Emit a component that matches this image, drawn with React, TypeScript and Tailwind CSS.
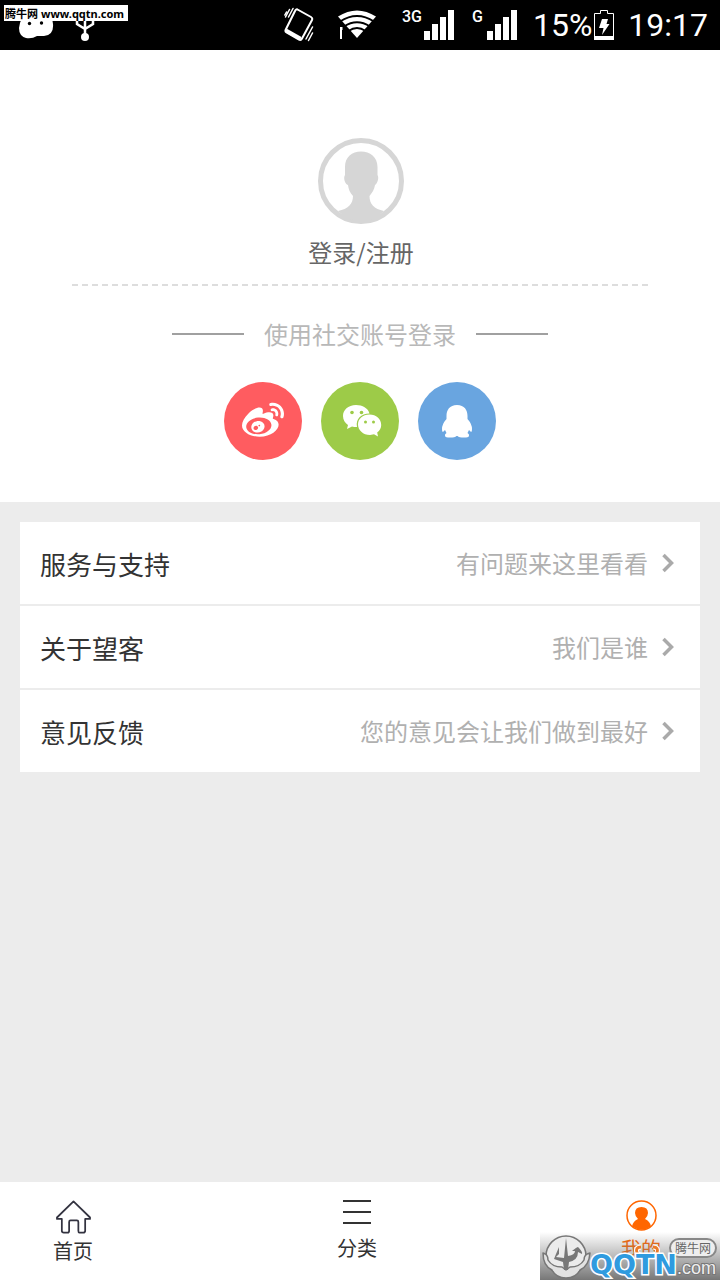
import React from 'react';
import { FaWeibo } from 'react-icons/fa';

const links = [
  { title: '服务与支持', hint: '有问题来这里看看', href: '#support' },
  { title: '关于望客', hint: '我们是谁', href: '#about' },
  { title: '意见反馈', hint: '您的意见会让我们做到最好', href: '#feedback' },
];

const SignalBars = () => (
  <svg width="30" height="30" viewBox="0 0 30 30" fill="#fff" aria-hidden="true">
    <path d="M0 21h6v9H0zM8 14h6v16H8zM16 7h6v23h-6zM24 0h6v30h-6z" />
  </svg>
);

const VibrateIcon = () => (
  <svg width="30" height="36" viewBox="0 0 30 36" fill="none" aria-hidden="true">
    <path d="M13.500 2.500 27 10Q28.800 11 28 13L18 31.500Q17 33.500 15 32.500L2.500 25.500Q.8 24.500 1.800 22.500L11 4Q12 1.800 13.500 2.500Z" stroke="#fff" strokeWidth="2" />
    <path d="M2.500 21.500 17.500 30 16 33.500 1.500 25.500Z" fill="#fff" />
    <path d="M9 1.500 4.500 10M5.500 2.500 1.500 10M2.500 5 .8 8M28.500 20l-6.500 12M28.500 26l-4 7.500" stroke="#fff" strokeWidth="1.500" strokeLinecap="round" />
  </svg>
);

const WifiIcon = () => (
  <svg width="38" height="30" viewBox="0 0 38 30" aria-hidden="true">
    <path d="M0 6.500Q19-5.500 38 6.500L19 28Z" fill="#fff" />
    <path d="M2 11.500Q19 .5 36 11.500M6 16.500Q19 8 32 16.500M10.500 21Q19 15 27.500 21" fill="none" stroke="#000" strokeWidth="1.800" />
    <path d="M2 17h2.500v3H4v9H2z" fill="#fff" />
  </svg>
);

const BatteryIcon = () => (
  <svg width="20" height="30" viewBox="0 0 20 30" aria-hidden="true">
    <path d="M.5 3.500h6v-3h7v3h6v26H.5z" fill="none" stroke="#fff" />
    <path d="M0 26h20v4H0z" fill="#fff" />
    <path d="M8 9h6l-1.500 5h3L8 25l1.500-7H5z" fill="#fff" />
  </svg>
);

const StatusBar = () => (
  <header className="relative flex h-[50px] items-center bg-black pl-[18px] pr-3 font-['Roboto',sans-serif] text-[32px] leading-none text-white">
    <svg width="36" height="30" viewBox="0 0 36 30" aria-hidden="true">
      <path d="M9 4Q18-1 27 4Q35 6 35 14Q36 25 26 26H19Q14 29 8 28Q1 26 1 18Q2 8 9 4Z" fill="#fff" />
      <circle cx="11.500" cy="13.500" r="1.700" />
      <circle cx="23.500" cy="13" r="1.700" />
    </svg>
    <svg className="ml-5" width="22" height="34" viewBox="0 0 22 34" fill="none" stroke="#fff" strokeWidth="2.500" aria-hidden="true">
      <path d="M11 2v26M3 12v4l8 5M19 12v4l-8 5" />
      <circle cx="11" cy="29" r="4" fill="#fff" stroke="none" />
    </svg>
    <div className="ml-auto flex items-center">
      <VibrateIcon />
      <div className="ml-6 mr-[26px]"><WifiIcon /></div>
      <span className="mr-0.5 self-start pt-0.5 text-base font-medium leading-none">3G</span>
      <SignalBars />
      <span className="ml-[18px] mr-1 self-start pt-0.5 text-base font-medium leading-none">G</span>
      <SignalBars />
      <span className="ml-4 mr-0.5">15%</span>
      <BatteryIcon />
      <span className="ml-3.5">19:17</span>
    </div>
    <div className="absolute left-1 top-[5px] flex h-4 w-[124px] items-center gap-[3px] whitespace-nowrap bg-white pl-px font-['Noto_Sans','Noto_Sans_CJK_SC',sans-serif] text-[11px] font-bold text-black">
      <span>腾牛网</span>
      <span>www.qqtn.com</span>
    </div>
  </header>
);

const AvatarIcon = () => (
  <svg width="86" height="86" viewBox="0 0 86 86" aria-hidden="true">
    <circle cx="43" cy="43" r="40.500" fill="none" stroke="#d6d6d6" strokeWidth="5" />
    <path d="M20 73C30 71 35 66 35 58C32 55 30.500 51 30 47C27 46 25 40 27 37V29C27 19 34 13.500 43 13.500S59.500 19 59.500 29V37C61.500 40 59 46 57 47C56.500 51 54 55 51.500 58C51.500 66 56 71 66 73Q56 83 43 83Q30 83 20 73Z" fill="#d6d6d6" />
  </svg>
);

const WechatIcon = () => (
  <svg width="40" height="34" viewBox="0 0 40 34" fill="#fff" aria-hidden="true">
    <path d="M14 1C6 1 1 6 1 12c0 4 2 7 5 9l-1 4 5-2.500q2 .5 5 .5C13.500 15 19 9.500 27.500 9.500 26 4 20.500 1 14 1Z" />
    <path d="M27.500 10.500C20.500 10.500 16 15 16 20.500s5 10.500 12 10.500l4-.8 4 2.300-.8-4c2.500-2 4-4.500 4-7.500 0-6-5-10.500-11.700-10.500Z" />
    <g fill="#9dcb48">
      <circle cx="10" cy="8.500" r="1.800" />
      <circle cx="19.500" cy="8.500" r="1.800" />
      <circle cx="23.500" cy="18" r="1.500" />
      <circle cx="31.500" cy="18" r="1.500" />
    </g>
  </svg>
);

const QqIcon = () => (
  <svg width="32" height="34" viewBox="0 0 32 34" fill="#fff" aria-hidden="true">
    <path d="M16 1C8.500 1 5.500 6 5.500 12v3Q1 20 1 25q0 4 1.500 2.500L4 26l1.500 3Q3.500 30 4 32q.5 1.500 5 1.500 5 0 6.500-1.500h1q1.500 1.500 6.500 1.500 4.500 0 5-1.500.5-2-1.500-3L28 26l1.500 1.500Q31 29 31 25q0-5-4.500-10v-3C26.500 6 23.500 1 16 1Z" />
  </svg>
);

const Watermark = () => (
  <div className="pointer-events-none absolute bottom-0 right-0 h-12 w-[180px] bg-linear-to-b from-transparent to-[#777777]">
    <svg className="absolute left-0.5 top-0.5" width="50" height="46" viewBox="0 0 50 46" fill="none" aria-hidden="true">
      <circle cx="24" cy="22" r="20" fill="#ebebeb" stroke="#777" strokeWidth="1.500" />
      <path d="M1 19q5 1 5 7 4 7 14 7l4 3 4-3q10 0 14-7 0-6 6-7-1 13-10 17-4 8-14 8T10 36Q1 32 1 19Z" fill="#e2e2e2" stroke="#777" strokeWidth="1.500" strokeLinejoin="round" />
      <path d="M24 4 26 22Q33 21 33 17H30Q35 13 36 13 41 18 40 20L36 18Q36 26 27 28L26 36H22L21 28 12 25 14 20 17 13V20L14 23 22 24Z" fill="#777" />
    </svg>
    <svg className="absolute left-[93px] top-3" width="28" height="18" viewBox="0 0 28 18" fill="none" aria-hidden="true">
      <path d="M8 3Q2 3 4 9Q6 12 14 12T24 9Q26 3 20 3" stroke="#fff" strokeWidth="5" />
      <path d="M8 3Q2 3 4 9Q6 12 14 12T24 9Q26 3 20 3" stroke="#ec7a28" strokeWidth="3" />
    </svg>
    <div className="absolute right-[3px] top-1.5 rounded-[10px] border-2 border-[#888888] bg-[#eeeeee] px-1 text-xs leading-4 text-[#666666]">腾牛网</div>
    <div className="absolute bottom-0 left-[50px] flex items-baseline whitespace-nowrap leading-6">
      <span className="font-['DejaVu_Sans',sans-serif] text-[27px] font-bold text-[#2f9bdf] [-webkit-text-stroke:3px_#ffffff] [paint-order:stroke_fill]">QQTN</span>
      <span className="font-['Liberation_Sans',sans-serif] text-lg leading-6 text-[#eeeeee] [-webkit-text-stroke:2px_#777777] [paint-order:stroke_fill]">.com</span>
    </div>
  </div>
);

const TabBar = () => (
  <nav className="flex h-[98px] items-start justify-between bg-white pl-[53px] pr-[59px] pt-[18px] text-xl leading-6 text-[#333333]">
    <a href="#home" className="flex flex-col items-center gap-1">
      <svg width="35" height="35" viewBox="0 0 36 35" fill="none" stroke="#333340" strokeWidth="1.800" strokeLinejoin="round" aria-hidden="true">
        <path d="M18 1 35 17.500V19H30V31Q30 33 28 33H24Q23 33 23 31V22Q23 20.500 21.500 20.500H15Q13.500 20.500 13.500 22V31Q13.500 33 12 33H8Q6 33 6 31V19H1V17.500Z" />
      </svg>
      首页
    </a>
    <a href="#category" className="flex flex-col items-center gap-2.5">
      <svg width="28" height="26" viewBox="0 0 28 26" fill="#333" aria-hidden="true">
        <path d="M0 0h28v2H0zM0 11h28v2H0zM0 22h28v2H0z" />
      </svg>
      分类
    </a>
    <a href="#mine" className="flex flex-col items-center gap-1.5 text-[#ff6600]" aria-current="page">
      <svg width="31" height="31" viewBox="0 0 31 31" aria-hidden="true">
        <circle cx="15.500" cy="15.500" r="14.500" fill="none" stroke="#f60" strokeWidth="1.500" />
        <path d="M6 26.500Q7 21 12 19Q9 16 9 13Q9 7 15.500 7T22 13Q22 16 19 19Q24 21 25 26.500Q16 33 6 26.500Z" fill="#f60" />
      </svg>
      我的
    </a>
  </nav>
);

export default function App() {
  return (
    <div className="relative flex min-h-screen flex-col bg-[#ececec] font-['Noto_Sans_CJK_SC',sans-serif]">
      <StatusBar />
      <main className="flex-1">
        <section className="flex flex-col items-center bg-white pb-[42px] pt-[88px]">
          <button type="button" className="flex flex-col items-center gap-3 pl-0.5 text-2xl leading-8 text-[#666666]">
            <AvatarIcon />
            登录/注册
          </button>
          <div className="mt-4 w-4/5 border-t-2 border-dashed border-[#dddddd]" />
          <div className="mt-8 flex items-center gap-5 text-2xl leading-8 text-[#b8b8b8]">
            <span className="h-0.5 w-[72px] bg-[#a0a0a0]" />
            使用社交账号登录
            <span className="h-0.5 w-[72px] bg-[#a0a0a0]" />
          </div>
          <div className="mt-8 flex gap-[19px]">
            <button type="button" aria-label="微博登录" className="flex size-[78px] items-center justify-center rounded-full bg-[#ff5c60]">
              <FaWeibo className="size-[42px] text-white" />
            </button>
            <button type="button" aria-label="微信登录" className="flex size-[78px] items-center justify-center rounded-full bg-[#9dcb48] pl-1">
              <WechatIcon />
            </button>
            <button type="button" aria-label="QQ登录" className="flex size-[78px] items-center justify-center rounded-full bg-[#69a5e0]">
              <QqIcon />
            </button>
          </div>
        </section>

        <ul className="m-5 flex flex-col gap-0.5">
          {links.map((link) => (
            <li key={link.href}>
              <a href={link.href} className="flex h-[82px] items-center bg-white pl-5 pr-[26px]">
                <span className="text-[26px] text-[#333333]">{link.title}</span>
                <span className="ml-auto text-2xl text-[#b0b0b0]">{link.hint}</span>
                <svg className="ml-3.5" width="12" height="20" viewBox="0 0 12 20" fill="none" stroke="#aaa" strokeWidth="3.500" aria-hidden="true">
                  <path d="M1.500 2 9.500 10 1.500 18" />
                </svg>
              </a>
            </li>
          ))}
        </ul>
      </main>
      <TabBar />
      <Watermark />
    </div>
  );
}
